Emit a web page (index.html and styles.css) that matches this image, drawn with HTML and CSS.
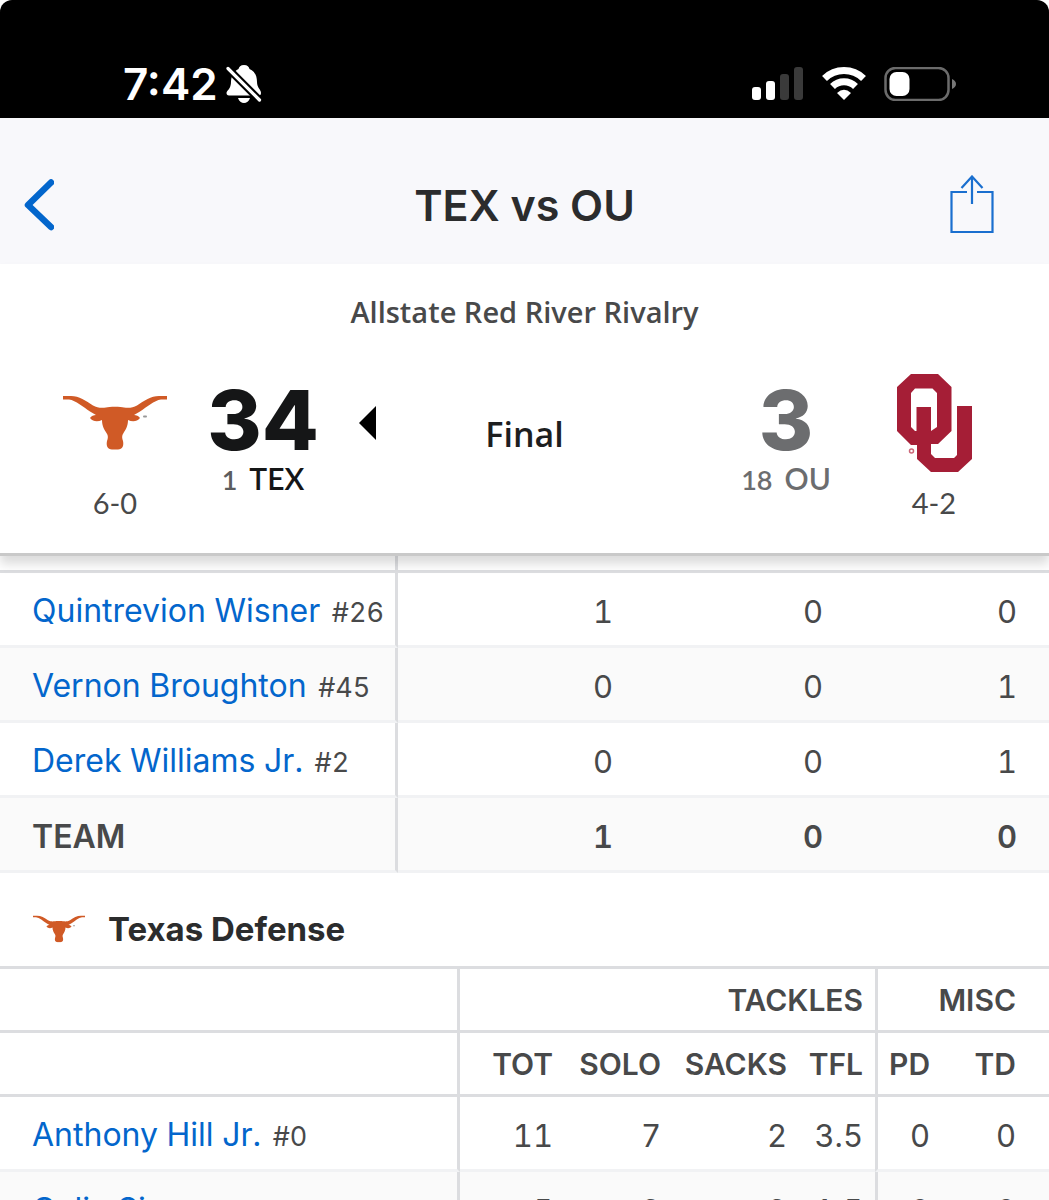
FILE: index.html
```html
<!DOCTYPE html>
<html lang="en">
<head>
<meta charset="utf-8">
<meta name="viewport" content="width=device-width, initial-scale=1">
<title>TEX vs OU</title>
<link rel="stylesheet" href="styles.css">
</head>
<body>
<svg width="0" height="0" class="defs" aria-hidden="true">
  <symbol id="longhorn" viewBox="0 0 104 54">
    <path fill="#d05a26" d="M0 0H8C16 0 23 5 30 9.500C34 12 39 12 43 11.500C46 10.500 58 10.500 61 11.500C65 12 70 12 74 9.500C81 5 88 0 96 0H104V3.500H98C91 4.500 84 11 77 15.500L71 19C73 19 76 20 77 22C74 26 69 26 65 24C65 30 62.500 34 60.500 37C58.500 40 59 42 60 45C61 50 59.500 53 55 53.500H49C44.500 53 43 50 44 45C45 42 45.500 40 43.500 37C41.500 34 39 30 39 24C35 26 30 26 27 22C28 20 31 19 33 19L27 15.500C20 11 13 4.500 6 3.500H0Z"/>
    <rect x="80" y="19.500" width="4" height="2" rx="1" fill="#999"/>
  </symbol>
</svg>
<div class="app">
  <header class="status">
    <div class="clock"><span>7:42</span>
      <svg width="36" height="40" viewBox="0 0 36 40" fill="#fff" aria-hidden="true"><path d="M18 1C21.500 1 23 3 23.500 5C29 7.500 31 12 31 18C31 24 35 25.500 35 29C35 31 34 31.500 32 31.500H3C0.500 31.500 0 29 1 27.500C3 25 5 23 5 17.500C5.500 11.500 7.500 7.500 12.500 5C13 3 14.500 1 18 1ZM12 34H24C23 37.500 20.500 39 18 39C15.500 39 13 37.500 12 34Z"/><path d="M0 2.500L36 38.500" stroke="#000" stroke-width="7.500"/><path d="M2 4.500L33.500 36" stroke="#fff" stroke-width="3.200" stroke-linecap="round"/></svg>
    </div>
    <div class="signals">
      <svg width="52" height="34" viewBox="0 0 52 34" aria-hidden="true"><g fill="#fff"><rect x="0" y="20" width="9" height="13" rx="3"/><rect x="14" y="14" width="9" height="19" rx="3"/></g><g fill="#3a3a3a"><rect x="28" y="7" width="9" height="26" rx="3"/><rect x="42" y="0" width="9" height="33" rx="3"/></g></svg>
      <svg width="44" height="34" viewBox="0 0 44 34" aria-hidden="true"><g fill="none" stroke="#fff" stroke-width="7"><path d="M2.500 11.500A28 28 0 0 1 41.500 11.500"/><path d="M10.500 19.500A16.500 16.500 0 0 1 33.500 19.500"/></g><path fill="#fff" d="M22 33L15 26Q22 19.500 29 26Z"/></svg>
      <svg width="72" height="34" viewBox="0 0 72 34" aria-hidden="true"><rect x="1.500" y="1" width="63" height="32" rx="10" fill="none" stroke="#6b6b6b" stroke-width="2.500"/><rect x="5.500" y="5" width="20" height="24" rx="7" fill="#fff"/><path d="M68 12Q72 14 72 17T68 22Z" fill="#777"/></svg>
    </div>
  </header>
  <nav class="nav">
    <button class="icon" aria-label="Back"><svg width="30" height="52" viewBox="0 0 30 52"><path d="M27 3.500L4 26L27 48" fill="none" stroke="#0366cc" stroke-width="6.500" stroke-linecap="round" stroke-linejoin="round"/></svg></button>
    <h1>TEX vs OU</h1>
    <button class="icon share" aria-label="Share"><svg width="44" height="60" viewBox="0 0 44 60"><path d="M17 17H1.500V57H42.500V17H27M22 29V2M11.500 13L22 1.500L32.500 13" fill="none" stroke="#1a6fcf" stroke-width="2.200"/></svg></button>
  </nav>
  <section class="score">
    <p class="event">Allstate Red River Rivalry</p>
    <div class="game">
      <div class="crest"><svg width="104" height="104" viewBox="0 0 104 104" aria-label="Texas"><use href="#longhorn" y="25" width="104" height="54"/></svg><span>6-0</span></div>
      <div class="side"><strong>34</strong><div class="team"><small>1</small><b>TEX</b></div></div>
      <div class="mid"><svg width="18" height="34" viewBox="0 0 18 34" aria-hidden="true"><path d="M18 0V34L1 17Z"/></svg><span>Final</span></div>
      <div class="side lost"><strong>3</strong><div class="team"><small>18</small><b>OU</b></div></div>
      <div class="crest"><svg width="76" height="104" viewBox="-1 0 76 104" aria-label="Oklahoma"><path fill="#a51e36" fill-rule="evenodd" d="M14 3H41L54.500 16V60L41 73H34V83L38 87H57L60 84V35H75V88L61 101H34L20 88V74H14L0 60V16ZM18 17.500L14 22V56L18 60H19.500V36H34V60L40 56V22L35.500 17.500Z"/><circle cx="14.500" cy="80" r="2" fill="none" stroke="#cc6879" stroke-width="1.500"/></svg><span>4-2</span></div>
    </div>
  </section>
  <main>
    <table class="fumbles">
      <colgroup><col class="name"><col class="a"><col class="b"><col></colgroup>
      <tbody>
        <tr class="rest"><td></td><td></td><td></td><td></td></tr>
        <tr><td><a href="#wisner">Quintrevion Wisner</a> <small>#26</small></td><td>1</td><td>0</td><td>0</td></tr>
        <tr class="alt"><td><a href="#broughton">Vernon Broughton</a> <small>#45</small></td><td>0</td><td>0</td><td>1</td></tr>
        <tr><td><a href="#williams">Derek Williams Jr.</a> <small>#2</small></td><td>0</td><td>0</td><td>1</td></tr>
        <tr class="alt total"><td>TEAM</td><td>1</td><td>0</td><td>0</td></tr>
      </tbody>
    </table>
    <h2><svg width="52" height="28" viewBox="0 0 104 54" aria-hidden="true"><use href="#longhorn"/></svg>Texas Defense</h2>
    <table class="defense">
      <colgroup><col class="name"><col class="tot"><col class="solo"><col class="sacks"><col class="tfl"><col class="pd"><col></colgroup>
      <thead>
        <tr><th></th><th colspan="4">TACKLES</th><th colspan="2" class="split">MISC</th></tr>
        <tr><th></th><th>TOT</th><th>SOLO</th><th>SACKS</th><th>TFL</th><th class="split">PD</th><th>TD</th></tr>
      </thead>
      <tbody>
        <tr><td><a href="#hill">Anthony Hill Jr.</a> <small>#0</small></td><td>11</td><td>7</td><td>2</td><td>3.5</td><td class="split">0</td><td>0</td></tr>
        <tr class="alt"><td><a href="#simmons">Colin Simmons</a> <small>#11</small></td><td>5</td><td>3</td><td>2</td><td>1.5</td><td class="split">0</td><td>0</td></tr>
      </tbody>
    </table>
  </main>
</div>
</body>
</html>
```
FILE: styles.css
```css
* { box-sizing: border-box; }
body {
  margin: 0;
  background: #fff;
  color: #48494a;
  font-family: Inter, "Liberation Sans", sans-serif;
}
.defs { display: block; }
.app { height: 100vh; overflow: hidden; }
.status {
  display: flex;
  justify-content: space-between;
  align-items: flex-end;
  height: 118px;
  padding: 0 93px 14px 123px;
  background: #000;
  color: #fff;
  border-radius: 12px 12px 0 0;
}
.clock { display: flex; align-items: center; gap: 8px; font-size: 44px; line-height: 40px; font-weight: 600; }
.signals { display: flex; align-items: center; gap: 18px; height: 40px; }
.nav {
  display: grid;
  grid-template-columns: 1fr auto 1fr;
  align-items: center;
  height: 146px;
  padding: 28px 24px 0;
  background: #f8f8fb;
}
.icon { display: flex; justify-self: start; width: 44px; padding: 0; border: 0; background: none; }
.share { justify-self: end; margin-right: 31px; }
h1 { margin: 0; color: #2b2c2d; font-size: 43px; line-height: 52px; font-weight: 600; }
.score {
  position: relative;
  height: 292px;
  padding: 28px 62px 0;
  background: #fff;
  border-bottom: 3px solid #c9c9c9;
  box-shadow: 0 8px 10px rgba(0, 0, 0, .14);
}
.event { margin: 0; text-align: center; font-family: "Open Sans", sans-serif; font-size: 29px; line-height: 40px; font-weight: 600; }
.game { display: grid; grid-template-columns: 106px 190px 1fr 190px 106px; padding-top: 39px; }
.crest { display: flex; flex-direction: column; align-items: center; font-family: Lato, sans-serif; font-size: 29px; line-height: 56px; }
.side { padding-top: 11px; text-align: center; color: #151617; }
.side strong { display: block; font-size: 83px; line-height: 76px; font-weight: 800; }
.team { display: flex; justify-content: center; align-items: baseline; gap: 12px; font-family: Lato, sans-serif; font-size: 30px; line-height: 40px; }
.team b { font-weight: 600; }
.team small { font-size: 27px; font-weight: 600; color: #5c5d5e; }
.side.lost, .lost small { color: #6c6d6f; }
.mid { display: grid; grid-template-columns: 18px 1fr 18px; align-items: center; height: 104px; color: #1d1e1f; font-family: "Open Sans", sans-serif; font-size: 34px; font-weight: 600; text-align: center; }
.mid span { padding-top: 22px; }
table { width: 100%; table-layout: fixed; border-collapse: separate; border-spacing: 0; font-size: 31px; font-variant-numeric: tabular-nums; }
th, td { padding: 0 32px 0 0; text-align: right; white-space: nowrap; line-height: 40px; }
td { height: 75px; padding-top: 5px; border-bottom: 3px solid #f1f2f4; }
th { height: 64px; border-bottom: 3px solid #dcdde0; font-size: 30px; font-weight: 600; }
td:first-child { padding: 5px 0 0 32px; text-align: left; font-size: 32px; }
td:first-child, th:first-child { border-right: 3px solid #dcdde0; }
a { color: #0366cc; text-decoration: none; }
td small { margin-left: 3px; font-size: 27px; }
.alt td { background: #fafafa; }
.total td { font-weight: 600; }
.fumbles .name { width: 398px; }
.fumbles .a { width: 247px; }
.fumbles .b { width: 210px; }
.fumbles .rest td { height: 17px; padding: 0; border-bottom-color: #dcdde0; }
h2 { display: flex; align-items: center; gap: 23px; height: 93px; margin: 0; padding: 18px 33px 0; color: #2b2c2d; font-size: 33px; line-height: 40px; font-weight: 700; }
.defense { border-top: 3px solid #dcdde0; }
.defense th, .defense td:not(:first-child) { padding-right: 12px; }
.defense th:last-child, .defense td:last-child { padding-right: 33px; }
.defense .name { width: 460px; }
.defense .tot { width: 105px; }
.defense .solo { width: 108px; }
.defense .sacks { width: 126px; }
.defense .tfl { width: 76px; }
.defense .pd { width: 67px; }
.defense .split { border-left: 3px solid #dcdde0; }
```
